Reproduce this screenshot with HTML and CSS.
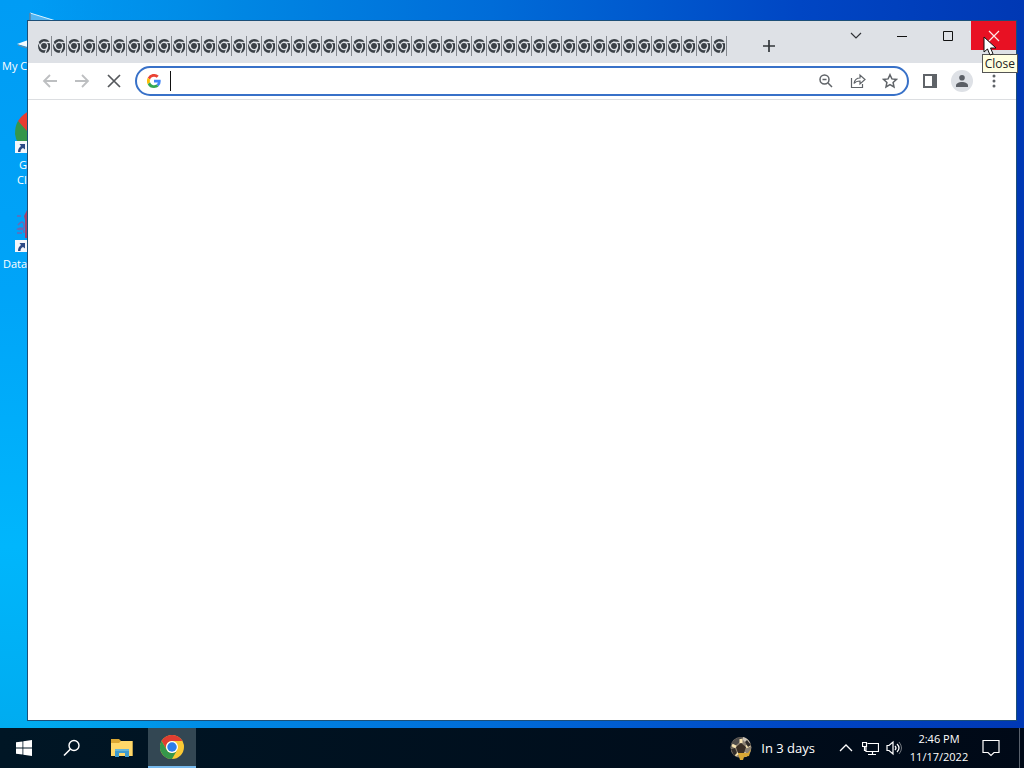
FILE: index.html
```html
<!DOCTYPE html>
<html lang="en">
<head>
<meta charset="utf-8">
<title>Desktop</title>
<link rel="stylesheet" href="styles.css">
</head>
<body>
<svg class="defs" aria-hidden="true">
  <symbol id="shortcut" viewBox="0 0 12 12"><path fill="#f4f6fa" d="M0 0h12v12H0z"/><path d="M3 11C3 8 4 6.500 6 5L4.500 3H10v5.500L8 7C6 8 5.500 9 5.500 11z" fill="#2b4a86"/></symbol>
  <symbol id="tab-chrome" viewBox="0 0 13 16"><path d="M.5 4Q3 1 6 1q4 0 5.500 3l.5 2v5q-1 3-4 4-4 .5-6.500-2Q0 11 0 6z" fill="#3a4046"/><circle cx="6" cy="8" r="3.600" fill="#3a4046" stroke="#dee1e6" stroke-width="1.300"/><path d="M5 4.200l7.500.5M2.800 9.800L0 4M9.300 9.500L7 15.500" fill="none" stroke="#dee1e6" stroke-width="1.300"/></symbol>
</svg>
<main class="desktop">
  <div class="shortcuts">
    <button class="shortcut">
      <svg width="75" height="48" viewBox="0 0 75 48"><path d="M30 3l26 8v12H30z" fill="#53b5f2" stroke="#d9f2ff"/><path d="M30 3v20" stroke="#1a4c78"/><path d="M17 34l14-5v9z" fill="#f4fbff"/><path d="M18 35l12 4" stroke="#748b9a"/></svg>
      <span class="name name-wide">My C</span>
    </button>
    <button class="shortcut">
      <svg width="75" height="48" viewBox="0 0 75 48"><path d="M32 1q-9 3-14 11l8 11 8-3z" fill="#e83c30"/><path d="M18 12q-3 5-3 13 1 11 12 15V22z" fill="#35964b"/><use href="#shortcut" x="15" y="32" width="12" height="12"/></svg>
      <span class="name name-inset">G</span><span class="name name-second">Cl</span>
    </button>
    <button class="shortcut">
      <svg width="75" height="48" viewBox="0 0 75 48"><path d="M17 8h4M18 17q5-6 6 0t-6 4q6-3 6 4M17 25h5" fill="none" stroke="#6c68b4" stroke-width="1.500"/><path d="M24 8l3-6v28h-2V12z" fill="#a0446c"/><use href="#shortcut" x="15" y="32" width="12" height="12"/></svg>
      <span class="name">Data</span>
    </button>
  </div>
  <section class="window" aria-label="Browser">
    <header class="titlebar">
      <div class="tabs" id="tabs"></div>
      <button class="new-tab" aria-label="New tab"><svg width="14" height="14"><path d="M7 1v12M1 7h12" stroke="#32363a" stroke-width="1.700"/></svg></button>
      <div class="controls">
        <button class="control" aria-label="Search tabs"><svg width="12" height="12"><path d="M1 3l5 5 5-5" fill="none" stroke="#303236" stroke-width="1.200"/></svg></button>
        <button class="control" aria-label="Minimize"><svg width="12" height="12"><path d="M1 6.500h10" stroke="#111"/></svg></button>
        <button class="control" aria-label="Maximize"><svg width="12" height="12"><path d="M1.500 1.500h9v9h-9z" fill="none" stroke="#111"/></svg></button>
        <button class="control close" aria-label="Close window"><svg width="12" height="12"><path d="M1 1l10 10M11 1L1 11" stroke="#ffe8e8" stroke-width="1.200"/></svg></button>
      </div>
    </header>
    <div class="toolbar">
      <button class="tool" aria-label="Back"><svg width="16" height="16"><path d="M15 8H2M8 2L2 8l6 6" fill="none" stroke="#bdbfc1" stroke-width="1.800"/></svg></button>
      <button class="tool" aria-label="Forward"><svg width="16" height="16"><path d="M1 8h13M8 2l6 6-6 6" fill="none" stroke="#bdbfc1" stroke-width="1.800"/></svg></button>
      <button class="tool" aria-label="Stop"><svg width="16" height="16"><path d="M2 2l12 12M14 2L2 14" stroke="#55585c" stroke-width="1.700"/></svg></button>
      <div class="omnibox">
        <svg width="14" height="14" viewBox="0 0 48 48"><path fill="#ea4335" d="M24 9.500c3.500 0 6.700 1.200 9.200 3.600l6.900-6.900A24 24 0 0 0 2.600 13.200l8 6.200A14 14 0 0 1 24 9.500z"/><path fill="#4285f4" d="M47 24.500c0-1.600-.2-3.100-.4-4.500H24v9h13a11 11 0 0 1-4.900 7.300l7.700 6A24 24 0 0 0 47 24.500z"/><path fill="#fbbc05" d="M10.500 28.600a14.500 14.500 0 0 1 0-9.200l-8-6.200a24 24 0 0 0 0 21.600z"/><path fill="#34a853" d="M24 48c6.500 0 12-2.100 15.800-5.800l-7.700-6a14.500 14.500 0 0 1-21.600-7.600l-8 6.200A24 24 0 0 0 24 48z"/></svg>
        <span class="caret"></span>
        <input class="address" type="text" aria-label="Address and search bar">
        <button class="action" aria-label="Zoom"><svg width="16" height="16"><circle cx="6.500" cy="6.500" r="4.500" fill="none" stroke="#5f6368" stroke-width="1.500"/><path d="M4.500 6.500h4M10 10l4 4" stroke="#5f6368" stroke-width="1.500"/></svg></button>
        <button class="action" aria-label="Share"><svg width="16" height="16"><path d="M1.500 5v9.500h11V11M4 10.500Q5 5 10 5V2l5 4.500-5 4.500V8Q6 8 4 10.500z" fill="none" stroke="#5f6368" stroke-width="1.200"/></svg></button>
        <button class="action" aria-label="Bookmark"><svg width="16" height="16"><path d="M8 1.700l1.900 4.200 4.600.5-3.400 3.100.9 4.500-4-2.300L4 14l.9-4.500-3.400-3.100 4.600-.5z" fill="none" stroke="#5f6368" stroke-width="1.500"/></svg></button>
      </div>
      <div class="menus">
        <button class="tool" aria-label="Side panel"><svg width="14" height="14"><path d="M1 1h12v12H1z" fill="none" stroke="#5f6368" stroke-width="2"/><path d="M9 1h4v12H9z" fill="#5f6368"/></svg></button>
        <button class="tool" aria-label="Profile"><svg width="24" height="24"><circle cx="12" cy="12" r="11" fill="#dee1e6"/><circle cx="12" cy="8.800" r="2.800" fill="#5b5f66"/><path d="M6 18v-1.500c0-4.700 12-4.700 12 0V18z" fill="#5b5f66"/></svg></button>
        <button class="tool" aria-label="Menu"><svg width="4" height="16"><circle cx="2" cy="3" r="1.500" fill="#5f6368"/><circle cx="2" cy="8" r="1.500" fill="#5f6368"/><circle cx="2" cy="13" r="1.500" fill="#5f6368"/></svg></button>
      </div>
    </div>
    <div class="page"></div>
  </section>
  <div class="tooltip" role="tooltip">Close</div>
  <svg class="pointer" width="14" height="21" viewBox="0 0 14 21" aria-hidden="true"><path d="M1 1v15l3.500-3 2.500 6 3-1.200-2.500-5.800H13z" fill="#fff" stroke="#111"/></svg>
</main>
<footer class="taskbar">
  <nav class="apps" aria-label="Applications">
    <button class="app" aria-label="Start"><svg width="16" height="16"><path d="M0 2.300L6.500 1.400v6.200H0zM7.300 1.300L16 0v7.600H7.300zM0 8.400h6.500v6.200L0 13.700zM7.300 8.400H16V16l-8.700-1.300z" fill="#fff"/></svg></button>
    <button class="app" aria-label="Search"><svg width="18" height="18"><circle cx="11" cy="6.500" r="5" fill="none" stroke="#fff" stroke-width="1.400"/><path d="M7.500 10L1 16.500" stroke="#fff" stroke-width="1.600"/></svg></button>
    <button class="app explorer" aria-label="File Explorer"><svg width="22" height="18"><path d="M0 0h8l2 2h11.500v15H0z" fill="#dba733"/><path d="M0 4h8l2-2h11.500v15H0z" fill="#ffd869"/><path d="M4 10h14v8h-4v-4H8v4H4z" fill="#3e9bce"/><path d="M4 10h14v2H4z" fill="#65b5d7"/></svg></button>
    <button class="app active" aria-label="Chrome"><svg width="24" height="24" viewBox="0 0 48 48"><circle cx="24" cy="24" r="24" fill="#fbc934"/><path d="M3.200 12a24 24 0 0 1 41.600 0H24a12 12 0 0 0-10.400 18z" fill="#df3d31"/><path d="M3.200 12A24 24 0 0 0 24 48l10.400-18a12 12 0 0 1-20.800 0z" fill="#35974b"/><circle cx="24" cy="24" r="12" fill="#fff"/><circle cx="24" cy="24" r="9.500" fill="#2c7de9"/></svg></button>
  </nav>
  <div class="tray">
    <button class="news"><svg width="24" height="24"><circle cx="12" cy="11.500" r="10.500" fill="#8b8172"/><path d="M2 8Q6 1 13 1l-2 5-5 4-4 2z" fill="#4e4c4b"/><path d="M12 7l5 4-2 6H9l-2-6z" fill="#392e25"/><path d="M12 7V3M17 11l4-2M15 17l3 3M9 17l-3 2M7 11L3 9" stroke="#f7e4b2" stroke-width="3"/><path d="M14 1q5 1 7 6l-3 1-4-4z" fill="#c9c1b4"/><path d="M18 4l4 5-3 2-3-5zM2 13l4-1 2 5-3 3z" fill="#302c2a"/><path d="M9 17h10l3-4-2 7-5 1-1 3h-3z" fill="#d7a735"/></svg><span>In 3 days</span></button>
    <button class="status" aria-label="Hidden icons"><svg width="14" height="14"><path d="M1 10l6-6 6 6" fill="none" stroke="#fff" stroke-width="1.300"/></svg></button>
    <button class="status" aria-label="Network"><svg width="17" height="16"><path d="M5.500 3.500h11v8H4V7M10.500 12v2.500M6 14.500h8M.5 2.500h4v4h-4zM2.500 6.500v4h2" fill="none" stroke="#fff" stroke-width="1.200"/></svg></button>
    <button class="status" aria-label="Volume"><svg width="17" height="16"><path d="M1 5.500h2l4-3.500v12l-4-3.500H1zM9 6q2 2 0 4M11 4q4 4 0 8" fill="none" stroke="#fff" stroke-width="1.200"/><path d="M13 2q5 6 0 12" fill="none" stroke="#747980"/></svg></button>
    <button class="clock"><span>2:46 PM</span><span>11/17/2022</span></button>
    <button class="notice" aria-label="Notifications"><svg width="18" height="18"><path d="M1 1.500h16v12h-5l-3 3-3-3H1z" fill="none" stroke="#fff" stroke-width="1.200"/></svg></button>
    <button class="show-desktop" aria-label="Show desktop"></button>
  </div>
</footer>
<script src="tabs.js"></script>
</body>
</html>
```
FILE: styles.css
```css
* { box-sizing: border-box; }
body { margin: 0; min-height: 100vh; display: flex; flex-direction: column; font-family: "Open Sans", "Noto Sans", sans-serif; font-size: 11px; color: #fff; overflow: hidden; }
button { margin: 0; padding: 0; border: 0; background: transparent; color: inherit; font: inherit; display: flex; align-items: center; justify-content: center; }
svg { display: block; flex: none; }
.defs { position: absolute; width: 0; height: 0; }
.desktop { flex: 1; position: relative; background: linear-gradient(90deg, transparent 3%, #0088e4 22%, #006cd8 48%, #0046c4 78%, #0038b4 100%), linear-gradient(180deg, #009cf4, #00a4f8 40%, #00b6fc 75%, #00acf0); }
.shortcuts { display: flex; flex-direction: column; gap: 3px; width: 75px; padding-top: 10px; }
.shortcut { flex-direction: column; justify-content: flex-start; align-items: flex-start; height: 96px; line-height: 15px; text-align: left; }
.name { padding-left: 3px; }
.name-wide { padding-left: 2px; }
.name-inset { padding-left: 19px; }
.name-second { padding-left: 17px; }
.window { position: absolute; top: 20px; left: 27px; right: 7px; bottom: 7px; display: flex; flex-direction: column; border: 1px solid #1c4f78; background: #fff; }
.titlebar { display: flex; height: 42px; background: #dee1e6; }
.tabs { display: flex; align-items: center; padding: 8px 0 0 9px; }
.tab { width: 15px; height: 20px; border-right: 1px solid #85898f; }
.new-tab { width: 28px; margin: 8px 0 0 28px; }
.controls { display: flex; margin-left: auto; align-items: flex-start; }
.control { width: 46px; height: 29px; }
.close { width: 45px; background: #e81123; }
.toolbar { height: 37px; display: flex; align-items: center; padding-left: 6px; border-bottom: 1px solid #dcdee1; }
.tool { width: 32px; height: 32px; }
.omnibox { flex: 1; height: 30px; margin-left: 5px; display: flex; align-items: center; padding: 0 1px 0 10px; border: 2px solid #3871c8; border-radius: 15px; background: #fff; }
.caret { width: 1px; height: 20px; margin-left: 9px; background: #111; }
.address { flex: 1; min-width: 0; border: 0; outline: 0; padding: 0; background: transparent; font: inherit; }
.action { width: 32px; height: 24px; }
.menus { display: flex; margin: 0 6px 0 5px; }
.page { flex: 1; background: #fff; }
.tooltip { position: absolute; top: 54px; right: 6px; padding: 0 2px; border: 1px solid #555; background: #ffffe1; color: #222; font-size: 12px; line-height: 17px; }
.pointer { position: absolute; top: 36px; right: 27px; }
.taskbar { height: 40px; display: flex; justify-content: space-between; background: linear-gradient(90deg, #001625, #000917); }
.apps, .tray { display: flex; }
.app { width: 48px; }
.explorer { width: 52px; }
.active { background: #334753; border-bottom: 2px solid #76b9ed; }
.news { gap: 8px; font-size: 13px; padding-right: 19px; }
.status { width: 24px; }
.clock { flex-direction: column; width: 66px; line-height: 18px; }
.notice { width: 38px; }
.show-desktop { width: 14px; background: linear-gradient(#59616c, #59616c) 9px 0 / 1px 100% no-repeat; }
```
FILE: tabs.js
```js
const tabs = document.getElementById("tabs");
for (let i = 0; i < 46; i += 1) {
  const tab = document.createElement("button");
  tab.className = "tab";
  tab.setAttribute("aria-label", `Tab ${i + 1}`);
  tab.innerHTML = '<svg width="13" height="16"><use href="#tab-chrome"></use></svg>';
  tabs.append(tab);
}
```
